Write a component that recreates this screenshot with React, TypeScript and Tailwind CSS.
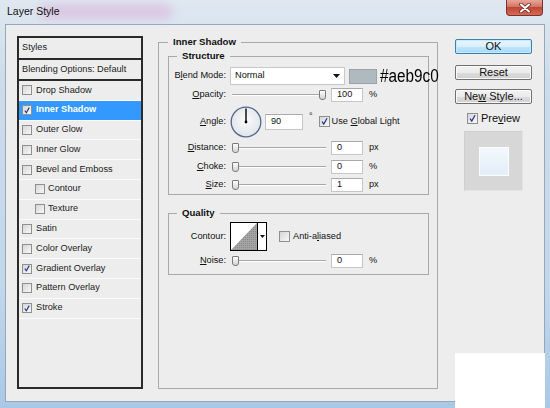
import React from "react"

const SANS = "font-['Liberation_Sans',Arial,sans-serif]"

function Check({ on, size = 10 }: { on?: boolean; size?: number }) {
  return (
    <span
      className={`flex shrink-0 items-center justify-center border border-[#8f8f8f] bg-[linear-gradient(135deg,#d6d6d6,#f8f8f8)] ${
        size === 11 ? "h-[11px] w-[11px]" : "h-[10px] w-[10px]"
      }`}
    >
      {on && (
        <svg viewBox="0 0 10 10" className="h-[9px] w-[9px]">
          <path d="M2.3 5.2 L4.2 7.9 L7.8 1.4" fill="none" stroke="#22358c" strokeWidth="1.4" />
        </svg>
      )}
    </span>
  )
}

function Slider({ left }: { left?: boolean }) {
  return (
    <div className="relative ml-[6px] flex h-[14px] w-[94px] shrink-0 items-center">
      <div className="h-[2px] w-full border-t border-b border-t-[#a6a6a6] border-b-white" />
      <div
        className={`absolute top-[2px] h-[10px] w-[7px] rounded-t-[1px] rounded-b-[3px] border border-[#7b7b7b] bg-[linear-gradient(#fdfdfd,#d3d3d3)] ${
          left ? "left-0" : "right-0"
        }`}
      />
    </div>
  )
}

function Field({ value, w = "w-[32px]", h = "h-[14px]", ml = "ml-[5px]" }: { value: string; w?: string; h?: string; ml?: string }) {
  return (
    <div className={`${ml} ${w} ${h} flex shrink-0 items-center border border-[#c6c6c6] border-t-[#a9a9a9] bg-white pl-[5px] text-[9.2px]`}>
      {value}
    </div>
  )
}

function Label({ children }: { children: React.ReactNode }) {
  return <div className="flex w-[49px] shrink-0 justify-end whitespace-nowrap text-[9.2px]">{children}</div>
}

function SliderRow({ label, value, unit, left, cls }: { label: React.ReactNode; value: string; unit: string; left?: boolean; cls: string }) {
  return (
    <div className={`flex h-[14px] items-center ${cls}`}>
      <Label>{label}</Label>
      <Slider left={left} />
      <Field value={value} />
      <span className="ml-[6px] text-[9.2px]">{unit}</span>
    </div>
  )
}

const styles: { name: string; on?: boolean; sel?: boolean; sub?: boolean }[] = [
  { name: "Drop Shadow" },
  { name: "Inner Shadow", on: true, sel: true },
  { name: "Outer Glow" },
  { name: "Inner Glow" },
  { name: "Bevel and Emboss" },
  { name: "Contour", sub: true },
  { name: "Texture", sub: true },
  { name: "Satin" },
  { name: "Color Overlay" },
  { name: "Gradient Overlay", on: true },
  { name: "Pattern Overlay" },
  { name: "Stroke", on: true },
]

function Button({ children, main }: { children: React.ReactNode; main?: boolean }) {
  return (
    <div
      className={`flex h-[15px] w-[77px] items-center justify-center rounded-[2px] border text-[11px] leading-none ${
        main
          ? "border-[#3c7fb1] bg-[linear-gradient(#eaf6fd,#d9f0fc_50%,#bee6fd_51%,#a7d9f5)] shadow-[inset_0_0_0_1px_#c5eafc]"
          : "border-[#707070] bg-[linear-gradient(#f2f2f2,#ebebeb_50%,#dddddd_51%,#cfcfcf)] shadow-[inset_0_0_0_1px_#fafafa]"
      }`}
    >
      {children}
    </div>
  )
}

export default function App() {
  return (
    <div className={`relative h-[408px] w-[550px] overflow-hidden bg-[linear-gradient(#dfe8f1,#cddcea_20%,#c3d7eb_70%,#a9c8e6)] text-[#111] ${SANS}`}>
      {/* title bar */}
      <div className="relative flex h-[24px] items-start justify-between pr-[7px]">
        <div className="pointer-events-none absolute left-[38px] top-[4px] h-[15px] w-[135px] rounded-full bg-[#dcb2d9] opacity-60 blur-[5px]" />
        <span className="relative pl-[7px] pt-[6px] text-[10.5px] leading-none">Layer Style</span>
        <div className="flex h-[16px] w-[37px] items-center justify-center rounded-b-[4px] border border-t-0 border-[#7d322b] bg-[linear-gradient(#e8a799,#d27565_45%,#bf4634_50%,#d56b57)]">
          <svg viewBox="0 0 14 10" className="h-[10px] w-[14px]">
            <path d="M3 1.5 L11 8.5 M11 1.5 L3 8.5" stroke="#6b2620" strokeWidth="3.6" strokeLinecap="round" />
            <path d="M3 1.5 L11 8.5 M11 1.5 L3 8.5" stroke="#ffffff" strokeWidth="2" strokeLinecap="round" />
          </svg>
        </div>
      </div>

      {/* client area */}
      <div className="ml-[5px] flex h-[378px] w-[540px] items-start border border-[#94a8bc] bg-[#ededed]">
        {/* styles list */}
        <div className="ml-[11px] mt-[11px] h-[353px] w-[126px] shrink-0 border-2 border-[#2a2a2a] text-[9.2px] text-[#1c1c1c]">
          <div className="flex h-[22px] items-center border-b-2 border-[#2a2a2a] pl-[3px]">Styles</div>
          <div className="flex h-[21px] items-center border-b-2 border-[#2a2a2a] pl-[3px]">Blending Options: Default</div>
          {styles.map(s => (
            <div
              key={s.name}
              className={`flex h-[19.8px] items-center border-b border-[#fbfbfb] ${s.sub ? "gap-[3px] pl-[16px]" : "gap-[4px] pl-[3px]"} ${
                s.sel ? "bg-[#3399ff] font-bold text-white" : ""
              }`}
            >
              <Check on={s.on} />
              <span>{s.name}</span>
            </div>
          ))}
        </div>

        {/* settings */}
        <fieldset className="ml-[15px] mt-[11px] h-[353px] w-[280px] min-w-0 shrink-0 border border-[#a9a9a9] pl-[9px] pr-[8px]">
          <legend className="px-[5px] text-[9.6px] font-bold leading-[12px]">Inner Shadow</legend>

          <fieldset className="mt-[2px] min-w-0 border border-[#a9a9a9] pb-[2px] pl-[8px]">
            <legend className="px-[5px] text-[9.6px] font-bold leading-[12px]">Structure</legend>

            <div className="mt-[5px] flex h-[18px] items-center">
              <Label>
                <span>B<span className="underline">l</span>end Mode:</span>
              </Label>
              <div className="ml-[4px] flex h-[18px] w-[115px] shrink-0 items-center justify-between border border-[#c9c9c9] bg-white pl-[4px] pr-[4px] text-[9.2px]">
                <span>Normal</span>
                <svg viewBox="0 0 7 4" className="h-[4px] w-[7px]">
                  <path d="M0 0 H7 L3.5 4 Z" fill="#111" />
                </svg>
              </div>
              <div className="ml-[4px] h-[15px] w-[28px] shrink-0 border border-[#9aa3a9] bg-[#aeb9c0]" />
              <span className="ml-[3px] inline-block shrink-0 origin-left scale-x-[0.85] whitespace-nowrap text-[18px] leading-none text-black">#aeb9c0</span>
            </div>

            <SliderRow
              cls="mt-[3px]"
              label={<span><span className="underline">O</span>pacity:</span>}
              value="100"
              unit="%"
            />

            <div className="mt-[4px] flex h-[32px] items-center">
              <Label>
                <span><span className="underline">A</span>ngle:</span>
              </Label>
              <svg viewBox="0 0 32 32" className="ml-[4px] h-[32px] w-[32px] shrink-0">
                <defs>
                  <radialGradient id="dial" cx="50%" cy="45%" r="60%">
                    <stop offset="0" stopColor="#fbfbfc" />
                    <stop offset="1" stopColor="#dfe2e7" />
                  </radialGradient>
                </defs>
                <circle cx="16" cy="16" r="14.8" fill="url(#dial)" stroke="#4f6790" strokeWidth="1.3" />
                <line x1="16" y1="16" x2="16" y2="2.5" stroke="#000" strokeWidth="1.4" />
                <circle cx="16" cy="16" r="1.4" fill="#000" />
              </svg>
              <Field value="90" w="w-[38px]" h="h-[16px]" ml="ml-[3px]" />
              <span className="ml-[6px] self-start pt-[6px] text-[9px] leading-none">°</span>
              <div className="ml-[6px] flex items-center gap-[2px]">
                <Check on size={11} />
                <span className="text-[9.2px]">
                  Use <span className="underline">G</span>lobal Light
                </span>
              </div>
            </div>

            <SliderRow
              cls="mt-[3px]"
              left
              label={<span><span className="underline">D</span>istance:</span>}
              value="0"
              unit="px"
            />
            <SliderRow
              cls="mt-[5px]"
              left
              label={<span><span className="underline">C</span>hoke:</span>}
              value="0"
              unit="%"
            />
            <SliderRow
              cls="mt-[4px]"
              left
              label={<span><span className="underline">S</span>ize:</span>}
              value="1"
              unit="px"
            />
          </fieldset>

          <fieldset className="mt-[12px] min-w-0 border border-[#a9a9a9] pb-[6px] pl-[8px]">
            <legend className="px-[5px] text-[9.6px] font-bold leading-[12px]">Quality</legend>

            <div className="mt-[3px] flex h-[29px] items-center">
              <Label>Contour:</Label>
              <div className="ml-[4px] flex h-[29px] w-[37px] shrink-0 border border-black bg-white">
                <svg viewBox="0 0 26 27" preserveAspectRatio="none" className="h-full flex-1">
                  <defs>
                    <pattern id="dots" width="2" height="2" patternUnits="userSpaceOnUse">
                      <rect width="2" height="2" fill="#a4a4a4" />
                      <rect width="1" height="1" fill="#8a8a8a" />
                    </pattern>
                  </defs>
                  <polygon points="0,27 26,0 26,27" fill="url(#dots)" />
                </svg>
                <div className="flex w-[9px] shrink-0 items-center justify-center border-l border-black">
                  <svg viewBox="0 0 5 3" className="h-[3px] w-[5px]">
                    <path d="M0 0 H5 L2.5 3 Z" fill="#111" />
                  </svg>
                </div>
              </div>
              <div className="ml-[12px] flex items-center gap-[3px]">
                <Check size={11} />
                <span className="text-[9.2px]">
                  Anti-a<span className="underline">l</span>iased
                </span>
              </div>
            </div>

            <SliderRow
              cls="mt-[3px]"
              left
              label={<span><span className="underline">N</span>oise:</span>}
              value="0"
              unit="%"
            />
          </fieldset>
        </fieldset>

        {/* buttons */}
        <div className="ml-[17px] mt-[14px] flex w-[77px] shrink-0 flex-col items-center">
          <Button main>OK</Button>
          <div className="mt-[11px]">
            <Button>Reset</Button>
          </div>
          <div className="mt-[9px]">
            <Button>
              <span>
                Ne<span className="underline">w</span> Style...
              </span>
            </Button>
          </div>
          <div className="mt-[9px] flex h-[11px] items-center gap-[3px]">
            <Check on size={11} />
            <span className="text-[11px] leading-none">
              Pre<span className="underline">v</span>iew
            </span>
          </div>
          <div className="mt-[7px] flex h-[60px] w-[59px] items-center justify-center border border-[#e4e4e4] border-t-[#cfcfcf] border-l-[#cfcfcf] bg-[#d7d7d7]">
            <div className="h-[29px] w-[30px] border border-[#fbfdff] bg-[linear-gradient(#f3f8fd,#e2eef9)]" />
          </div>
        </div>
      </div>

      <div className="absolute bottom-0 right-[5px] h-[55px] w-[90px] bg-white" />
    </div>
  )
}
